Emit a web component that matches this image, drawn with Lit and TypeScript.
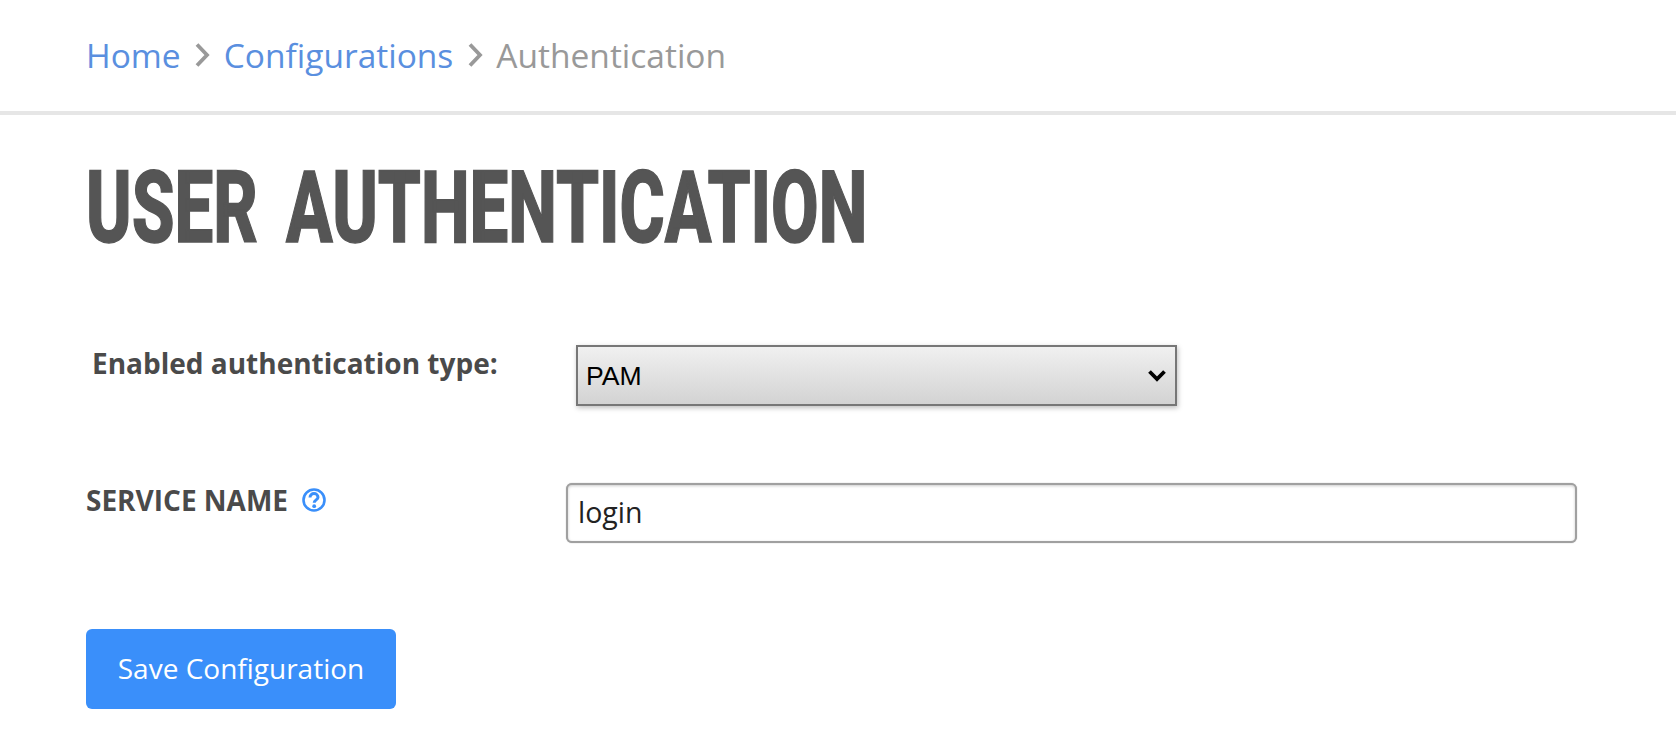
import { LitElement, html, css } from "lit";
import { customElement } from "lit/decorators.js";

@customElement("app-root")
export class AppRoot extends LitElement {
  static styles = css`
    :host { display: block; width: 1676px; height: 756px; background: #fff; font-family: "Open Sans", sans-serif; color: #4a4a4a; overflow: hidden; }
    * { box-sizing: border-box; }
    .crumbs { height: 115px; border-bottom: 4px solid #e6e6e6; padding: 0 86px 2px; display: flex; align-items: center; gap: 13.5px; font-size: 33.5px; }
    .crumbs a { color: #5a8fdf; text-decoration: none; }
    .crumbs .cur { color: #999; }
    .crumbs svg { width: 16px; height: 26px; display: block; }
    .main { padding: 0 86px; }
    h1 { margin: 0; padding-top: 43px; height: 172px; font-family: Roboto, "Liberation Sans", sans-serif; font-weight: 800; font-size: 100px; line-height: 100px; color: #555; white-space: nowrap; word-spacing: 16px; -webkit-text-stroke: 1.5px #555; }
    h1 span { display: inline-block; transform: scaleX(0.69); transform-origin: left center; }
    .row-a { display: flex; height: 61px; margin-top: 58px; align-items: flex-start; }
    .lab-a { width: 490px; padding: 0 0 0 6px; font-size: 28px; font-weight: 700; line-height: 36px; white-space: nowrap; }
    .sel-wrap { position: relative; width: 601px; height: 61px; }
    select { appearance: none; width: 100%; height: 100%; border: 2px solid #777; border-radius: 0; padding: 0 8px; font: 26.6px "Liberation Sans", sans-serif; color: #000; background: linear-gradient(#f0f0f0, #d3d3d3); box-shadow: 1px 2px 5px rgba(0,0,0,.25); }
    .chev { position: absolute; right: 10px; top: 24px; width: 20px; height: 13px; pointer-events: none; }
    .row-b { display: flex; height: 60px; margin-top: 77px; align-items: flex-start; }
    .lab-b { width: 480px; display: flex; align-items: center; gap: 14px; font-size: 28px; font-weight: 700; line-height: 34px; white-space: nowrap; }
    .lab-b svg { width: 24px; height: 24px; display: block; }
    input { width: 1011px; height: 60px; border: 2px solid #a0a0a0; border-radius: 6px; padding: 0 11px 2px 10px; font: 28.5px "Open Sans", sans-serif; color: #222; background: #fff; box-shadow: inset 0 1px 3px rgba(0,0,0,.2), 0 0 1px #999; outline: none; }
    button { display: block; margin-top: 86px; width: 310px; height: 80px; border: 0; border-radius: 6px; background: #3a8ffa; color: #fff; font: 28px "Open Sans", sans-serif; padding: 0 0 2px; }
  `;

  render() {
    const sep = html`<svg viewBox="0 0 16 26" fill="none" stroke="#999" stroke-width="3.8"><path d="M3 2.5L13 13L3 23.5"/></svg>`;
    return html`
      <nav class="crumbs">
        <a href="#">Home</a>${sep}<a href="#">Configurations</a>${sep}<span class="cur">Authentication</span>
      </nav>
      <div class="main">
        <h1><span>USER AUTHENTICATION</span></h1>
        <div class="row-a">
          <label class="lab-a">Enabled authentication type:</label>
          <div class="sel-wrap">
            <select><option>PAM</option></select>
            <svg class="chev" viewBox="0 0 20 13" fill="none" stroke="#000" stroke-width="3.8"><path d="M2.5 2.5L10 10L17.5 2.5"/></svg>
          </div>
        </div>
        <div class="row-b">
          <label class="lab-b">SERVICE NAME
            <svg viewBox="0 0 24 24" fill="none" stroke="#3a8ffa"><circle cx="12" cy="12" r="10.5" stroke-width="2.6"/><path d="M8 9.4C8 7 10 5.6 12 5.6S16 7 16 9.2C16 11.8 12.2 12 12.2 14.8" stroke-width="3"/><circle cx="12.2" cy="18.2" r="1.9" fill="#3a8ffa" stroke="none"/></svg>
          </label>
          <input type="text" .value=${"login"} />
        </div>
        <button>Save Configuration</button>
      </div>
    `;
  }
}
